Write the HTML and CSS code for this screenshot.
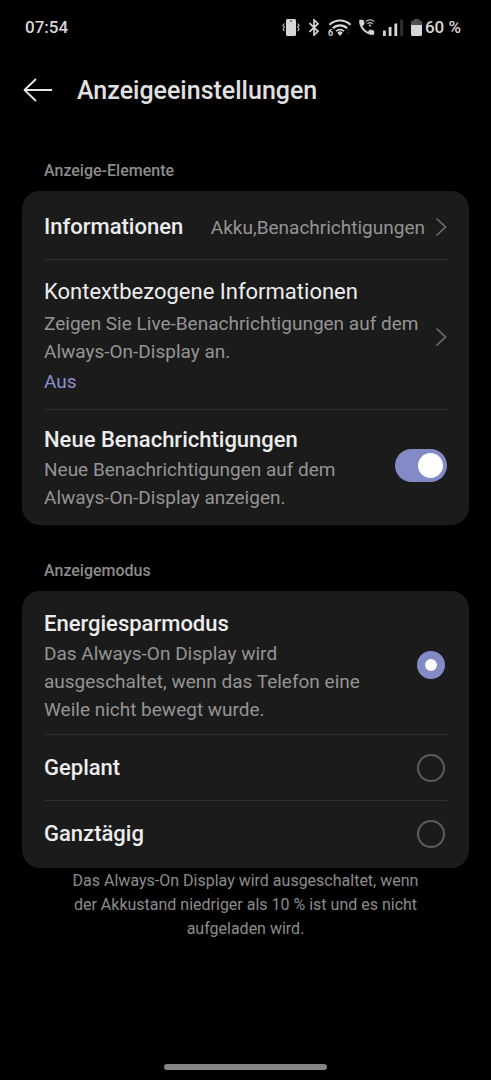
FILE: index.html
```html
<!DOCTYPE html>
<html lang="de">
<head>
<meta charset="utf-8">
<meta name="viewport" content="width=device-width, initial-scale=1">
<title>Anzeigeeinstellungen</title>
<link rel="stylesheet" href="styles.css">
</head>
<body>
<div class="screen">
  <div class="status">
    <time class="status-text">07:54</time>
    <div class="status-icons">
      <svg width="18" height="17" viewBox="0 0 18 17" aria-hidden="true">
        <rect x="4" y="0" width="10" height="17" rx="1.5" fill="#d6d6d6"/>
        <circle cx="9" cy="2" r="0.8" fill="#000"/>
        <path d="M2.400 4.500 1 6.400l1.400 1.900L1 10.200l1.400 2M15.600 4.500 17 6.400l-1.400 1.900 1.400 1.900-1.400 2" fill="none" stroke="#c4c4c4" stroke-width="1.100"/>
      </svg>
      <svg width="12" height="17" viewBox="0 0 12 17" aria-hidden="true">
        <path d="M1.500 4.200 10 12.300 6 16V1l4 3.700-8.500 8.100" fill="none" stroke="#d6d6d6" stroke-width="1.700"/>
      </svg>
      <svg class="wifi" width="23" height="17" viewBox="0 0 23 17" aria-hidden="true">
        <path d="M1.500 5.800a15 15 0 0 1 21 0" fill="none" stroke="#d6d6d6" stroke-width="2.200"/>
        <path d="M4.800 9.200a10.500 10.500 0 0 1 14.400 0" fill="none" stroke="#d6d6d6" stroke-width="2.200"/>
        <path d="M8 12.200a6 6 0 0 1 8 0" fill="none" stroke="#d6d6d6" stroke-width="1.600"/>
        <path d="M9.300 13.700a3.800 3.800 0 0 1 5.400 0L12 16.900z" fill="#d6d6d6"/>
        <text x="0" y="17" class="wifi-gen">6</text>
        <path d="M19 11.500 20.500 9.800l1.500 1.700zM19 13.500l1.500 1.700 1.500-1.700z" fill="#333"/>
      </svg>
      <svg width="16" height="17" viewBox="0 0 16 17" aria-hidden="true">
        <path d="M.3 2.200C.2 1.500.700 1 1.400 1h2.300c.500 0 .9.300 1 .8l.5 2.700c.1.400 0 .800-.3 1L3.200 7.300c1.300 2.400 3.200 4.300 5.600 5.600l1.700-1.700c.3-.3.600-.4 1-.3l2.600.5c.500.100.9.500.9 1v2.300c0 .6-.5 1.200-1.200 1.100C6.500 15.400.800 9.500.3 2.200z" fill="#d6d6d6" stroke="#d6d6d6" stroke-width="0.500"/>
        <path d="M6.800 2.600a6.200 6.200 0 0 1 8.400 0M8.400 4.700a4 4 0 0 1 5.200 0" fill="none" stroke="#c4c4c4" stroke-width="1.200"/>
        <path d="M9.600 6a2.200 2.200 0 0 1 2.800 0L11 7.800z" fill="#d6d6d6"/>
      </svg>
      <svg width="20" height="17" viewBox="0 0 20 17" aria-hidden="true">
        <path d="M0 11.500h2.800V17H0zM5.700 8h2.800v9H5.700zM11.400 4.500h2.800V17h-2.800z" fill="#d6d6d6"/>
        <path d="M17.200.5H20V17h-2.800z" fill="#303030"/>
      </svg>
      <svg width="11" height="17" viewBox="0 0 11 17" aria-hidden="true">
        <path d="M0 6V3q0-1.500 1.500-1.500H3V0h5v1.500h1.500Q11 1.500 11 3v3z" fill="#505050"/>
        <path d="M0 6h11v9.500q0 1.500-1.500 1.500h-8Q0 17 0 15.500z" fill="#d6d6d6"/>
      </svg>
      <span class="status-text battery-text">60 %</span>
    </div>
  </div>

  <header class="header">
    <button class="back" type="button" aria-label="Zurück">
      <svg width="30" height="26" viewBox="0 0 30 26" aria-hidden="true">
        <path d="M13 2 1.500 13 13 24M1.500 13H29" fill="none" stroke="#e6e6e6" stroke-width="1.800" stroke-linejoin="round"/>
      </svg>
    </button>
    <h1 class="title">Anzeigeeinstellungen</h1>
  </header>

  <main class="content">
    <section class="group">
      <h2 class="group-title">Anzeige-Elemente</h2>
      <div class="card">
        <button class="row row-info" type="button">
          <span class="label">Informationen</span>
          <span class="value">Akku,Benachrichtigungen</span>
          <svg class="chevron" width="12" height="20" viewBox="0 0 12 20" aria-hidden="true"><path d="M1.500 1.500 10.500 10l-9 8.500" fill="none" stroke="#6e6e6e" stroke-width="1.700"/></svg>
        </button>
        <button class="row row-context" type="button">
          <span class="text">
            <span class="label label-light">Kontextbezogene Informationen</span>
            <span class="desc">Zeigen Sie Live-Benachrichtigungen auf dem Always-On-Display an.</span>
            <span class="desc state">Aus</span>
          </span>
          <svg class="chevron" width="12" height="20" viewBox="0 0 12 20" aria-hidden="true"><path d="M1.500 1.500 10.500 10l-9 8.500" fill="none" stroke="#6e6e6e" stroke-width="1.700"/></svg>
        </button>
        <label class="row row-switch">
          <span class="text">
            <span class="label">Neue Benachrichtigungen</span>
            <span class="desc">Neue Benachrichtigungen auf dem Always-On-Display anzeigen.</span>
          </span>
          <input class="switch" type="checkbox" role="switch" checked>
        </label>
      </div>
    </section>

    <section class="group">
      <h2 class="group-title">Anzeigemodus</h2>
      <div class="card card-modes">
        <label class="row row-mode">
          <span class="text">
            <span class="label">Energiesparmodus</span>
            <span class="desc">Das Always-On Display wird ausgeschaltet, wenn das Telefon eine Weile nicht bewegt wurde.</span>
          </span>
          <input class="radio" type="radio" name="mode" checked>
        </label>
        <label class="row row-option">
          <span class="label">Geplant</span>
          <input class="radio" type="radio" name="mode">
        </label>
        <label class="row row-option">
          <span class="label">Ganztägig</span>
          <input class="radio" type="radio" name="mode">
        </label>
      </div>
      <p class="note">Das Always-On Display wird ausgeschaltet, wenn der Akkustand niedriger als 10 % ist und es nicht aufgeladen wird.</p>
    </section>
  </main>
  <div class="home-bar"></div>
</div>
</body>
</html>
```

FILE: styles.css
```css
* { box-sizing: border-box; }

body {
  margin: 0;
  background: #000;
  color: #ececec;
  font-family: Roboto, "Liberation Sans", sans-serif;
}

.screen {
  display: flex;
  flex-direction: column;
  min-height: 100vh;
  padding-bottom: 10px;
}

.status {
  display: flex;
  justify-content: space-between;
  align-items: center;
  height: 54px;
  padding: 0 30px 0 25px;
}

.status-text {
  font-size: 17px;
  font-weight: 500;
  color: #d6d6d6;
}

.status-icons {
  display: flex;
  align-items: center;
  gap: 8px;
}

.battery-text { margin-left: -5px; }

.wifi { overflow: visible; }

.wifi-gen {
  font-size: 9px;
  font-weight: 700;
  fill: #d6d6d6;
  stroke: #000;
  stroke-width: 1px;
  paint-order: stroke;
}

.header {
  display: flex;
  align-items: center;
  gap: 24px;
  height: 72px;
  padding: 0 23px;
}

.back {
  display: flex;
  padding: 0;
  border: 0;
  background: none;
}

.title {
  margin: 0;
  font-size: 25px;
  font-weight: 500;
  color: #e0e0e0;
}

.content { padding: 35px 22px; }

.group + .group { margin-top: 36px; }

.group-title {
  margin: 0;
  padding: 0 22px 10px;
  font-size: 16px;
  line-height: 20px;
  font-weight: 500;
  color: #8c8c8c;
}

.card {
  padding: 0 22px;
  border-radius: 18px;
  background: #1b1b1b;
}

.card-modes { padding-bottom: 2px; }

.row {
  display: flex;
  align-items: center;
  gap: 10px;
  width: 100%;
  border: 0;
  background: none;
  color: inherit;
  font: inherit;
  text-align: left;
}

.row + .row { border-top: 1px solid #303030; }

.row-info { padding: 22px 0 18px; }
.row-context { padding: 18px 0 13px; }
.row-switch { padding: 9px 0 13px; }
.row-mode { padding: 14px 0 10px; }

.row-option {
  height: 66px;
  padding-top: 1px;
}

.text {
  flex: 1;
  min-width: 0;
}

.row-switch .text { padding-top: 7px; }
.row-mode .text { padding-top: 5px; }

.label {
  display: block;
  flex: 1;
  font-size: 22px;
  line-height: 28px;
  font-weight: 500;
}

.label-light {
  margin-bottom: 4px;
  font-weight: 400;
}

.desc {
  display: block;
  font-size: 19px;
  line-height: 28px;
  color: #949494;
}

.row-mode .desc,
.row-switch .desc { margin-top: 2px; }
.row-mode .desc { max-width: 330px; }
.row-switch .desc { max-width: 310px; }

.state {
  margin-top: 2px;
  color: #8a90cc;
}

.value {
  font-size: 19px;
  color: #949494;
}

.chevron { flex: none; }

.switch {
  flex: none;
  display: flex;
  align-items: center;
  width: 52px;
  height: 33px;
  margin: 0;
  padding: 0 4px;
  border-radius: 17px;
  background: #4a4a4a;
  appearance: none;
}

.switch::before {
  content: "";
  width: 25px;
  height: 25px;
  border-radius: 50%;
  background: #fff;
}

.switch:checked {
  justify-content: flex-end;
  background: #828bc5;
}

.radio {
  flex: none;
  width: 28px;
  height: 28px;
  margin: 0 2px 0 0;
  border: 2px solid #5c5c5c;
  border-radius: 50%;
  appearance: none;
}

.radio:checked {
  border: 8px solid #828bc5;
  background: #fff;
}

.note {
  margin: 0;
  padding: 1px 40px;
  font-size: 16px;
  line-height: 24px;
  text-align: center;
  color: #8c8c8c;
}

.home-bar {
  width: 33.3%;
  height: 6px;
  margin: auto auto 0;
  border-radius: 3px;
  background: #848484;
}
```
